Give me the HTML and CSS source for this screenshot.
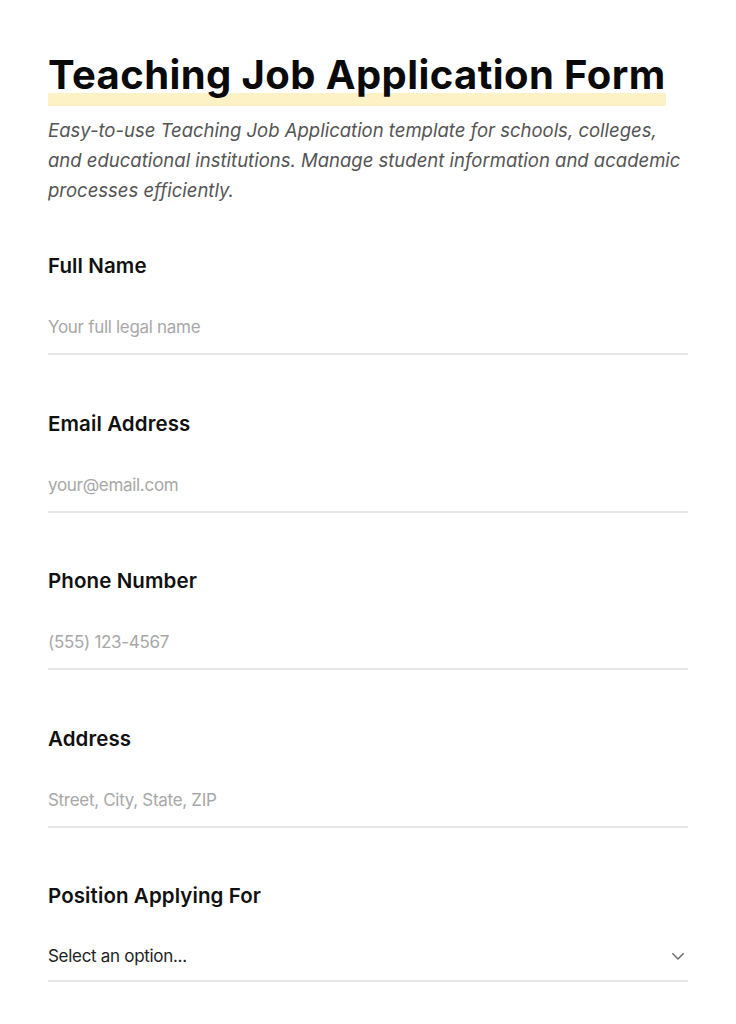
FILE: index.html
```html
<!DOCTYPE html>
<html lang="en">
<head>
<meta charset="utf-8">
<title>Teaching Job Application Form</title>
<link rel="stylesheet" href="styles.css">
</head>
<body>
<main class="page">
  <header class="header">
    <h1 class="title">Teaching Job Application Form</h1>
    <p class="intro">Easy-to-use Teaching Job Application template for schools, colleges, and educational institutions. Manage student information and academic processes efficiently.</p>
  </header>
  <form class="form">
    <div class="field">
      <label class="label" for="name">Full Name</label>
      <input class="input" id="name" type="text" placeholder="Your full legal name">
    </div>
    <div class="field">
      <label class="label" for="email">Email Address</label>
      <input class="input" id="email" type="email" placeholder="your@email.com">
    </div>
    <div class="field">
      <label class="label" for="phone">Phone Number</label>
      <input class="input" id="phone" type="tel" placeholder="(555) 123-4567">
    </div>
    <div class="field">
      <label class="label" for="address">Address</label>
      <input class="input" id="address" type="text" placeholder="Street, City, State, ZIP">
    </div>
    <div class="field">
      <label class="label" for="position">Position Applying For</label>
      <div class="select-wrap">
        <select class="input select" id="position">
          <option>Select an option...</option>
        </select>
        <svg class="chevron" width="12" height="7" viewBox="0 0 12 7" aria-hidden="true"><path d="M0.8 0.8 L6 6 L11.2 0.8" fill="none" stroke="#666" stroke-width="1.4" stroke-linecap="round" stroke-linejoin="round"/></svg>
      </div>
    </div>
  </form>
</main>
</body>
</html>
```
FILE: styles.css
```css
* { box-sizing: border-box; }
html, body { margin: 0; padding: 0; background: #fff; }
body { font-family: Inter, "Noto Sans", sans-serif; color: #111; }
.page { padding: 49px 48px 0 48px; width: 736px; }
.header { margin-bottom: 47px; }
.title {
  width: fit-content;
  margin: 0;
  padding: 2px 0 8px 0;
  font-size: 40px;
  font-weight: 700;
  letter-spacing: 0.4px;
  line-height: 48px;
  color: #0a0a0a;
  background: linear-gradient(to bottom, transparent 44px, #fdf1c6 44px, #fdf1c6 57px, transparent 57px);
}
.intro {
  margin: 8px 0 0 0;
  font-size: 18.5px;
  font-style: italic;
  line-height: 30px;
  color: #555;
  letter-spacing: 0;
}
.form { display: flex; flex-direction: column; gap: 54.5px; }
.field { display: flex; flex-direction: column; }
.label {
  font-size: 20.5px;
  font-weight: 600;
  letter-spacing: 0.1px;
  line-height: 28px;
  color: #111;
  margin-bottom: 29px;
}
.input {
  font-family: Inter, "Noto Sans", sans-serif;
  font-size: 17px;
  line-height: 21px;
  letter-spacing: -0.3px;
  border: none;
  border-bottom: 2px solid #e6e6e6;
  padding: 8px 0 15px 0;
  margin: 0;
  width: 100%;
  outline: none;
  background: transparent;
  color: #222;
}
.input::placeholder { color: #a8a8a8; }
.select-wrap { position: relative; }
.select {
  appearance: none;
  -webkit-appearance: none;
  border-radius: 0;
  height: 43px;
  padding: 6px 0 13px 0;
  line-height: 22px;
}
.chevron { position: absolute; right: 4px; top: 14px; }
```
